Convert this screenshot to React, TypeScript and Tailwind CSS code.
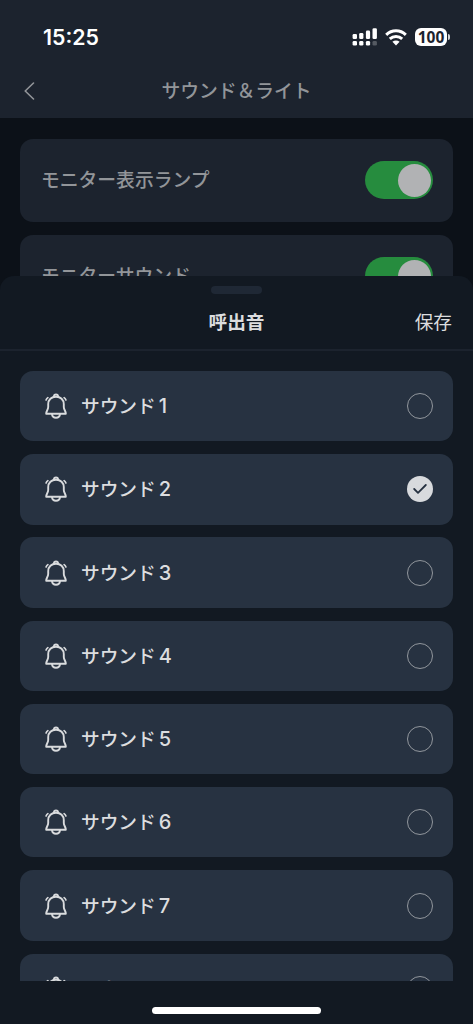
import React from 'react';
import clsx from 'clsx';

const sounds = [1, 2, 3, 4, 5, 6, 7, 8];
const selectedSound = 2;

function SignalIcon() {
  return (
    <svg width="25" height="18" viewBox="0 0 25 18" fill="#fff">
      <rect x="0.6" y="6" width="4.4" height="5" rx="1.3" />
      <rect x="7.2" y="5" width="4.2" height="6" rx="1.3" />
      <rect x="13.9" y="2.6" width="4.2" height="8.4" rx="1.3" />
      <rect x="20.5" y="0.3" width="4.4" height="10.7" rx="1.3" />
      <rect x="0.6" y="13" width="4.4" height="4.6" rx="1.3" />
      <rect x="7.2" y="13" width="4.2" height="4.6" rx="1.3" />
      <rect x="13.9" y="13" width="4.2" height="4.6" rx="1.3" />
      <rect x="20.5" y="13" width="4.4" height="4.6" rx="1.3" opacity="0.25" />
    </svg>
  );
}

function WifiIcon() {
  return (
    <svg width="22" height="17" viewBox="0 0 22 17" fill="none" stroke="#fff" strokeWidth="3">
      <path d="M1.2 5.8C6.8 0.5 15.2 0.5 20.8 5.8" />
      <path d="M4.8 9.9C8.4 6.6 13.6 6.6 17.2 9.9" />
      <path d="M7.4 12.8C9.5 11 12.5 11 14.6 12.8L11 16.5Z" fill="#fff" stroke="none" />
    </svg>
  );
}

function Battery() {
  return (
    <div className="flex items-center gap-px">
      <div className="flex h-[18px] w-8 items-center justify-center rounded-[6px] bg-white pt-px font-['Noto_Sans',sans-serif] text-[15.5px] leading-none font-bold text-[#1c232e]">
        100
      </div>
      <div className="h-[6px] w-[2px] rounded-r-full bg-white/80" />
    </div>
  );
}

function BellIcon() {
  return (
    <svg
      width="24"
      height="28"
      viewBox="0 0 24 28"
      fill="none"
      stroke="#d9dbdd"
      strokeWidth="1.9"
      strokeLinecap="round"
      strokeLinejoin="round"
    >
      <path d="M4.2 12.2C4.2 7.8 7.4 4.7 12 4.7S19.8 7.8 19.8 12.2V15C19.8 17.8 21.8 18.7 21.8 21.7H2.2C2.2 18.7 4.2 17.8 4.2 15Z" />
      <path d="M9.9 4.6C10 1.8 14 1.8 14.1 4.6" />
      <path d="M8 22.2C8.4 27 15.6 27 16 22.2" />
      <path d="M2.1 8C2.4 7 3 6.2 3.9 5.6M21.9 8C21.6 7 21 6.2 20.1 5.6" strokeWidth="1.7" />
    </svg>
  );
}

function Radio({ checked }: { checked: boolean }) {
  return (
    <div
      className={clsx(
        'flex size-[26px] items-center justify-center rounded-full',
        checked ? 'bg-[#d8dadd]' : 'border-[1.3px] border-[#92979d]'
      )}
    >
      {checked && (
        <svg width="14" height="10" viewBox="0 0 14 10" fill="none" stroke="#273241" strokeWidth="1.8" strokeLinecap="round" strokeLinejoin="round">
          <path d="M1.2 5L5 8.8L12.8 1" />
        </svg>
      )}
    </div>
  );
}

function SettingCard({ label }: { label: string }) {
  return (
    <div className="flex h-[83px] shrink-0 items-center justify-between rounded-[13px] bg-[#1c232e] pr-[20px] pl-[21px]">
      <span className="pt-[2px] text-[18.8px] font-medium text-[#929599]">{label}</span>
      <div className="mb-px flex h-[38px] w-[68px] items-center justify-end rounded-full bg-[#268c3e] pr-[2px]">
        <div className="size-[33px] rounded-full bg-[#b1b2b4]" />
      </div>
    </div>
  );
}

function SoundRow({ index }: { index: number }) {
  return (
    <div className="flex h-[70.3px] shrink-0 items-center justify-between rounded-[13px] bg-[#273241] pr-[20px] pl-[24px]">
      <div className="flex items-center">
        <BellIcon />
        <span className="ml-[13px] pt-[2px] text-[18.7px] font-medium text-[#dcdddf]">サウンド</span>
        <span className="ml-[3px] text-[20px] font-medium text-[#dcdddf]">{index}</span>
      </div>
      <Radio checked={index === selectedSound} />
    </div>
  );
}

export default function App() {
  return (
    <div className="flex h-[1024px] w-[473px] flex-col overflow-hidden bg-[#0c1118] font-['Inter','Noto_Sans_CJK_JP',sans-serif]">
      {/* Header */}
      <header className="h-[118px] shrink-0 bg-[#1c232e]">
        <div className="flex h-[74px] items-center justify-between pr-[23px] pl-[43px]">
          <span className="pt-[2px] text-[21.3px] font-semibold text-white">15:25</span>
          <div className="flex items-center gap-[8px]">
            <SignalIcon />
            <WifiIcon />
            <Battery />
          </div>
        </div>
        <div className="grid h-[34px] grid-cols-[1fr_auto_1fr] items-center px-[24px]">
          <svg width="11" height="18" viewBox="0 0 11 18" fill="none" stroke="#929599" strokeWidth="1.6" strokeLinecap="round" strokeLinejoin="round">
            <path d="M9.5 1L1.2 9L9.5 17" />
          </svg>
          <h1 className="pt-[2px] text-[18.8px] font-medium text-[#929599]">サウンド＆ライト</h1>
        </div>
      </header>

      {/* Settings behind the sheet */}
      <main className="flex h-[158px] shrink-0 flex-col gap-[13px] overflow-hidden px-[20px] pt-[21px]">
        <SettingCard label="モニター表示ランプ" />
        <SettingCard label="モニターサウンド" />
      </main>

      {/* Bottom sheet */}
      <section className="flex flex-1 flex-col overflow-hidden rounded-t-[14px] bg-[#121922]">
        <div className="mx-auto mt-[10px] h-[8px] w-[51px] shrink-0 rounded-full bg-[#1f2835]" />
        <div className="grid h-[55px] shrink-0 grid-cols-[1fr_auto_1fr] items-center px-[21px] pt-[3px]">
          <h2 className="col-start-2 text-[18.7px] font-bold text-[#dcdddf]">呼出音</h2>
          <button className="justify-self-end text-[18.7px] text-[#dcdddf]">保存</button>
        </div>
        <div className="h-[2px] shrink-0 bg-[#1c232e]" />
        <div className="flex h-[630px] shrink-0 flex-col gap-[12.95px] overflow-hidden px-[20px] pt-[20px]">
          {sounds.map(n => (
            <SoundRow key={n} index={n} />
          ))}
        </div>
        <div className="mx-auto mt-[26px] h-[7px] w-[169px] shrink-0 rounded-full bg-white" />
      </section>
    </div>
  );
}
